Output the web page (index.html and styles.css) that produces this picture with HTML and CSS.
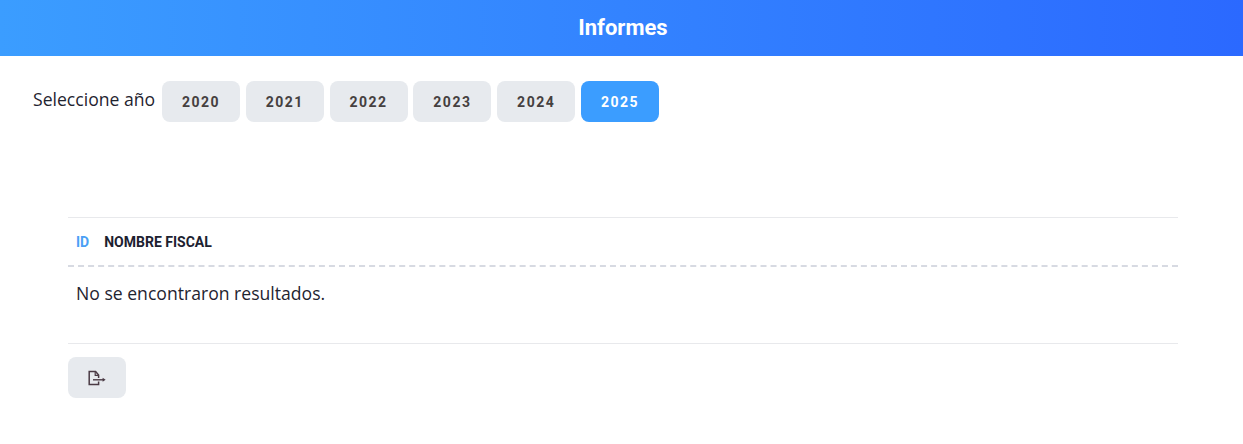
FILE: index.html
```html
<!DOCTYPE html>
<html lang="es">
<head>
    <meta charset="UTF-8">
    <title>Informes</title>
    <link rel="stylesheet" href="styles.css">
</head>
<body>

    <!-- Cabecera -->
    <header class="top-bar">
        <h1>Informes</h1>
    </header>

    <!-- Selector de año -->
    <div class="year-row">
        <span class="year-label">Seleccione año</span>
        <button class="year-btn">2020</button>
        <button class="year-btn">2021</button>
        <button class="year-btn">2022</button>
        <button class="year-btn">2023</button>
        <button class="year-btn">2024</button>
        <button class="year-btn active">2025</button>
    </div>

    <!-- Tabla -->
    <div class="report">
        <div class="report-head">
            <span class="col-id">ID</span>
            <span class="col-name">NOMBRE FISCAL</span>
        </div>
        <p class="report-empty">No se encontraron resultados.</p>
        <div class="report-foot">
            <button class="export-btn" aria-label="Exportar">
                <svg width="18" height="16" viewBox="0 0 18 16" fill="none">
                    <path d="M10.6 8V5L7.6 1.4H1.2v13.2h9.4v-3" stroke="#4a3a44" stroke-width="1.5"/>
                    <path d="M7.2 1.6v3.8h3.2" stroke="#4a3a44" stroke-width="1.2"/>
                    <path d="M5 9.8h10.5" stroke="#4a3a44" stroke-width="1.4"/>
                    <path d="M14.6 7.8l3 2-3 2z" fill="#4a3a44"/>
                </svg>
            </button>
        </div>
    </div>

</body>
</html>
```

FILE: styles.css
```css
/* Estilos generales */
body {
    font-family: "Open Sans", "Noto Sans", sans-serif;
    margin: 0;
    padding: 0;
    background-color: #fff;
    color: #1f2430;
}
.top-bar {
    height: 56px;
    display: flex;
    align-items: center;
    justify-content: center;
    padding: 0 0 2px 3px;
    box-sizing: border-box;
    background: linear-gradient(90deg, #3b9dff, #2b69ff);
}
.top-bar h1 {
    margin: 0;
    color: #fff;
    font-family: Roboto, sans-serif;
    font-size: 22px;
    font-weight: 700;
}
.year-row {
    display: flex;
    align-items: flex-start;
    padding: 25px 0 0 33px;
}
.year-label {
    width: 124px;
    font-size: 17.6px;
    line-height: 37px;
    white-space: nowrap;
    margin-right: 5px;
}
.year-btn {
    width: 78px;
    height: 41px;
    margin-right: 5.8px;
    border: none;
    border-radius: 8px;
    background-color: #e7eaee;
    color: #45403f;
    font-family: Roboto, sans-serif;
    font-size: 14px;
    font-weight: 700;
    letter-spacing: 1.5px;
}
.year-btn.active {
    background-color: #3b9dff;
    color: #fff;
}
.report {
    margin: 95px 65px 0 68px;
}
.report-head {
    display: flex;
    align-items: center;
    gap: 15px;
    height: 47px;
    padding-left: 8px;
    border-top: 1px solid #e8e9ec;
    border-bottom: 2px dashed #d7dae2;
    font-family: Roboto, sans-serif;
    font-size: 14px;
    font-weight: 700;
}
.col-id {
    color: #4b9ff5;
}
.col-name {
    color: #1c2130;
}
.report-empty {
    height: 77px;
    margin: 0;
    padding: 14px 8px 0;
    box-sizing: border-box;
    font-size: 17.6px;
    line-height: 24px;
    border-bottom: 1px solid #e8e9ec;
}
.report-foot {
    padding-top: 13px;
}
.export-btn {
    display: flex;
    align-items: center;
    justify-content: center;
    width: 58px;
    height: 41px;
    padding: 0;
    border: none;
    border-radius: 8px;
    background-color: #e7eaee;
}
```
